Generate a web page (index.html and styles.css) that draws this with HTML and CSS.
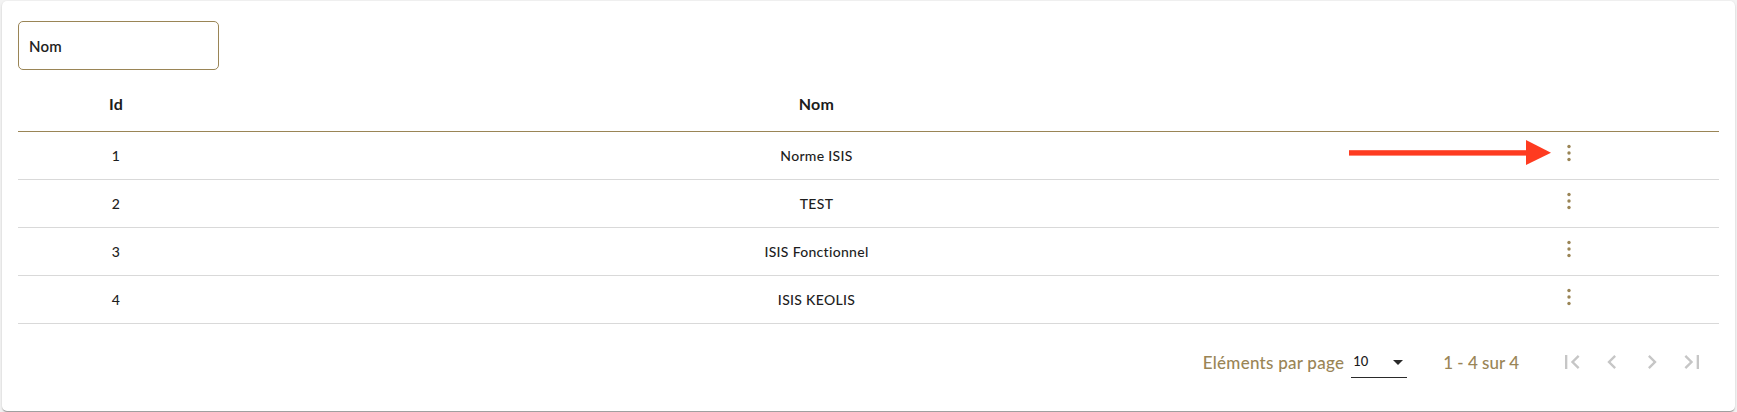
FILE: index.html
```html
<!DOCTYPE html>
<html lang="fr">
<head>
<meta charset="utf-8">
<title>Normes</title>
<link rel="stylesheet" href="styles.css">
</head>
<body>
<div class="card">
  <div class="filter">
    <span class="filter-label">Nom</span>
  </div>

  <table class="grid">
    <colgroup>
      <col class="col-id">
      <col class="col-name">
      <col class="col-actions">
    </colgroup>
    <thead>
      <tr>
        <th>Id</th>
        <th>Nom</th>
        <th></th>
      </tr>
    </thead>
    <tbody>
      <tr>
        <td>1</td>
        <td>Norme ISIS</td>
        <td class="actions"><span class="kebab"><svg viewBox="0 0 6 20" width="6" height="20"><circle cx="3" cy="3.5" r="1.7"/><circle cx="3" cy="10" r="1.7"/><circle cx="3" cy="16.5" r="1.7"/></svg></span></td>
      </tr>
      <tr>
        <td>2</td>
        <td>TEST</td>
        <td class="actions"><span class="kebab"><svg viewBox="0 0 6 20" width="6" height="20"><circle cx="3" cy="3.5" r="1.7"/><circle cx="3" cy="10" r="1.7"/><circle cx="3" cy="16.5" r="1.7"/></svg></span></td>
      </tr>
      <tr>
        <td>3</td>
        <td>ISIS Fonctionnel</td>
        <td class="actions"><span class="kebab"><svg viewBox="0 0 6 20" width="6" height="20"><circle cx="3" cy="3.5" r="1.7"/><circle cx="3" cy="10" r="1.7"/><circle cx="3" cy="16.5" r="1.7"/></svg></span></td>
      </tr>
      <tr>
        <td>4</td>
        <td>ISIS KEOLIS</td>
        <td class="actions"><span class="kebab"><svg viewBox="0 0 6 20" width="6" height="20"><circle cx="3" cy="3.5" r="1.7"/><circle cx="3" cy="10" r="1.7"/><circle cx="3" cy="16.5" r="1.7"/></svg></span></td>
      </tr>
    </tbody>
  </table>

  <div class="paginator">
    <span class="page-size-label">Eléments par page</span>
    <div class="page-size">
      <span class="page-size-value">10</span>
      <span class="caret"></span>
    </div>
    <span class="range">1 - 4 sur 4</span>
    <div class="nav">
      <span class="nav-btn"><svg viewBox="0 0 24 24" width="28" height="28"><path d="M18.41 16.59L13.82 12l4.59-4.59L17 6l-6 6 6 6zM6 6h2v12H6z"/></svg></span>
      <span class="nav-btn"><svg viewBox="0 0 24 24" width="28" height="28"><path d="M15.41 7.41L14 6l-6 6 6 6 1.41-1.41L10.83 12z"/></svg></span>
      <span class="nav-btn"><svg viewBox="0 0 24 24" width="28" height="28"><path d="M10 6L8.59 7.41 13.17 12l-4.58 4.59L10 18l6-6z"/></svg></span>
      <span class="nav-btn"><svg viewBox="0 0 24 24" width="28" height="28"><path d="M5.59 7.41L10.18 12l-4.59 4.59L7 18l6-6-6-6zM16 6h2v12h-2z"/></svg></span>
    </div>
  </div>

  <svg class="annotation" viewBox="0 0 202 25" width="202" height="25">
    <rect x="0" y="10.2" width="180" height="5.4" fill="#fe3b20"/>
    <polygon points="177,0 202,12.7 177,25" fill="#fe3b20"/>
  </svg>
</div>
</body>
</html>
```

FILE: styles.css
```css
html, body {
  margin: 0;
  padding: 0;
}

body {
  background: #f3f3f3;
  font-family: Lato, "Noto Sans", sans-serif;
  color: #1e1e1e;
  height: 412px;
  overflow: hidden;
}

.card {
  position: relative;
  box-sizing: border-box;
  margin: 1px 2px 0 2px;
  height: 410px;
  background: #fff;
  border-radius: 5px;
  padding: 20px 16px 0 16px;
  box-shadow: 0 2px 1px -1px rgba(0,0,0,.2), 0 1px 1px 0 rgba(0,0,0,.14), 0 1px 3px 0 rgba(0,0,0,.12);
}

.filter {
  box-sizing: border-box;
  width: 201px;
  height: 49px;
  border: 1px solid #9a8556;
  border-radius: 5px;
  display: flex;
  align-items: center;
  padding-left: 10px;
}

.filter-label {
  font-size: 15px;
  font-weight: 600;
  color: #222;
  letter-spacing: 0.2px;
}

.grid {
  width: 100%;
  margin-top: 5px;
  border-collapse: collapse;
  table-layout: fixed;
}

.col-id { width: 196px; }
.col-actions { width: 300px; }

.grid th {
  height: 56px;
  padding: 0;
  font-size: 16px;
  font-weight: 700;
  color: #1c1c1c;
  text-align: center;
  vertical-align: middle;
  border-bottom: 1px solid #9a8556;
  letter-spacing: 0.3px;
}

.grid td {
  height: 47px;
  padding: 0;
  font-size: 14px;
  font-weight: 500;
  text-align: center;
  vertical-align: middle;
  border-bottom: 1px solid #d9d9d9;
  letter-spacing: 0.3px;
}

.grid td.actions {
  padding-bottom: 6px;
  box-sizing: border-box;
}

.kebab {
  display: inline-flex;
  align-items: center;
  justify-content: center;
  width: 40px;
  height: 28px;
  vertical-align: middle;
}

.kebab svg {
  fill: #9a8556;
}

.paginator {
  display: flex;
  justify-content: flex-end;
  align-items: center;
  height: 56px;
  margin-top: 10px;
  padding-right: 7px;
  color: #9a8556;
  font-size: 17px;
  font-weight: 500;
}

.page-size-label {
  margin-right: 7px;
  letter-spacing: 0.25px;
}

.page-size {
  align-self: flex-start;
  margin-top: 16px;
  box-sizing: border-box;
  width: 56px;
  height: 28px;
  padding: 0 4px 5px 2px;
  border-bottom: 1px solid #2a2a2a;
  display: flex;
  align-items: center;
  justify-content: space-between;
}

.page-size-value {
  font-size: 13px;
  color: #1a1a1a;
  font-weight: 500;
}

.caret {
  width: 0;
  height: 0;
  border-left: 5px solid transparent;
  border-right: 5px solid transparent;
  border-top: 5px solid #2a2a2a;
  margin-top: 3px;
}

.range {
  margin-left: 36px;
  margin-right: 33px;
}

.nav {
  display: flex;
}

.nav-btn {
  width: 40px;
  height: 40px;
  display: flex;
  align-items: center;
  justify-content: center;
}

.nav-btn svg {
  fill: #c6c6c6;
}

.annotation {
  position: absolute;
  left: 1347px;
  top: 139px;
}
```
